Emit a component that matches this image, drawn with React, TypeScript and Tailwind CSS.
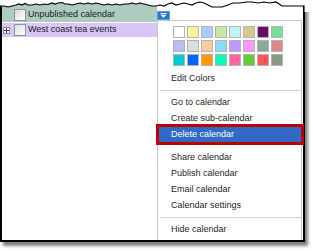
const swatches = [
  ["#ffffff", "#fff599", "#aaccff", "#c8e8a0", "#bff5f2", "#d6c687", "#6a0a6a", "#77dd99"],
  ["#bbbbf7", "#dddddd", "#ffcc99", "#88ddff", "#bb99ff", "#ff99ff", "#88aa9a", "#dd8888"],
  ["#00cccc", "#0066ff", "#ff9900", "#00ffbb", "#ff6699", "#66cc33", "#ff5555", "#889988"],
];

const tear =
  "0,6 4,6 8,7 12,6 16,5 19,4 22,5 25,3.5 28,5 32,5 36,4 40,5 44,4 48,4.5 52,3 55,4 58,3 62,2.5 65,4 68,4 72,5 76,4 80,3 84,4 88,3 92,4 96,3 100,4 104,5 108,4 112,5 116,4 120,5 124,4 128,4 132,3 136,4 140,3 144,4 148,5 152,6 156,6 160,5 164,6 168,4 172,3 176,5 180,4 184,3 188,4 192,5 196,3 200,2 204,3 208,5 212,7 218,7 222,7 228,5 233,3 240,3 246,2 252,2 258,3 264,2 270,3 276,2 279,4 282,6 290,6 298,6 304,6";

function Checkbox() {
  return <div className="h-[12px] w-[12px] shrink-0 border border-[#8a949c] bg-gradient-to-br from-[#dcdcdc] to-white" />;
}

function Item({ label }: { label: string }) {
  return <div className="h-[16px] pl-[13px] leading-[16px] text-[#1e1e1e]">{label}</div>;
}

export default function App() {
  return (
    <div
      className="relative h-[251px] w-[313px] overflow-hidden bg-white text-[9px]"
      style={{ fontFamily: '"Liberation Sans", Arial, sans-serif' }}
    >
      <div className="flex h-[242px] w-[305px] border-x-2 border-b-2 border-black bg-white shadow-[3px_4px_3px_rgba(0,0,0,0.5)]">
        {/* calendar list */}
        <div className="flex w-[155px] flex-col">
          <div className="flex h-[22px] items-center gap-[2px] bg-[#aecbbf] pl-[12px] pt-[8px] text-[#1a1a1a]">
            <Checkbox />
            <span>Unpublished calendar</span>
          </div>
          <div className="mt-px flex h-[14px] items-center bg-[#d7c6f7] pl-px text-[#1a1a1a]">
            <div className="flex h-[7px] w-[7px] items-center justify-center border border-[#8c8c8c] bg-white">
              <svg width="5" height="5" viewBox="0 0 5 5">
                <path d="M0 2.5h5M2.5 0v5" stroke="#333" strokeWidth="1" />
              </svg>
            </div>
            <div className="ml-[4px] flex items-center gap-[2px]">
              <Checkbox />
              <span>West coast tea events</span>
            </div>
          </div>
        </div>

        {/* dropdown menu */}
        <div className="flex w-[146px] flex-col pt-[11px]">
          <div className="flex h-[9px] w-[13px] items-center justify-center border border-[#5e9bd6] bg-[#2a78c8]">
            <svg width="7" height="5" viewBox="0 0 7 5">
              <rect x="0.5" y="0" width="6" height="1" fill="#fff" />
              <path d="M0.5 1.8h6L3.5 4.8z" fill="#fff" />
            </svg>
          </div>
          <div className="mr-px flex flex-1 flex-col border-l border-r border-t border-[#c8c8c8] bg-white">
            <div className="flex flex-col gap-[2px] pl-[15px] pt-[5px]">
              {swatches.map((row, i) => (
                <div key={i} className="flex gap-[2px]">
                  {row.map((c) => (
                    <div key={c} className="h-[12px] w-[12px] border border-[#b4b4b4]" style={{ backgroundColor: c }} />
                  ))}
                </div>
              ))}
            </div>
            <div className="mt-[4px]">
              <Item label="Edit Colors" />
            </div>
            <div className="ml-[2px] mt-[4px] h-px bg-[#cfcfcf]" />
            <div className="mt-[3px]">
              <Item label="Go to calendar" />
              <Item label="Create sub-calendar" />
              <div className="relative h-[16px] pt-px">
                <div className="ml-px h-[15px] bg-[#316ac5] pl-[12px] leading-[15px] text-white">Delete calendar</div>
                <div className="absolute -bottom-[3px] -left-[2px] -right-[3px] -top-[2px] border-[3px] border-[#bf0000]" />
              </div>
            </div>
            <div className="mt-[7px]">
              <Item label="Share calendar" />
              <Item label="Publish calendar" />
              <Item label="Email calendar" />
              <Item label="Calendar settings" />
            </div>
            <div className="ml-[2px] mt-[4px] h-px bg-[#cfcfcf]" />
            <div className="mt-[3px]">
              <Item label="Hide calendar" />
            </div>
          </div>
        </div>
      </div>

      {/* torn top edge */}
      <svg className="absolute left-0 top-0" width="313" height="12" viewBox="0 0 313 12">
        <polygon points={`0,0 313,0 313,12 304,12 ${tear.split(" ").reverse().join(" ")}`} fill="#fff" />
        <polyline points={`${tear} 304,12`} fill="none" stroke="#000" strokeWidth="1.2" />
      </svg>
    </div>
  );
}
